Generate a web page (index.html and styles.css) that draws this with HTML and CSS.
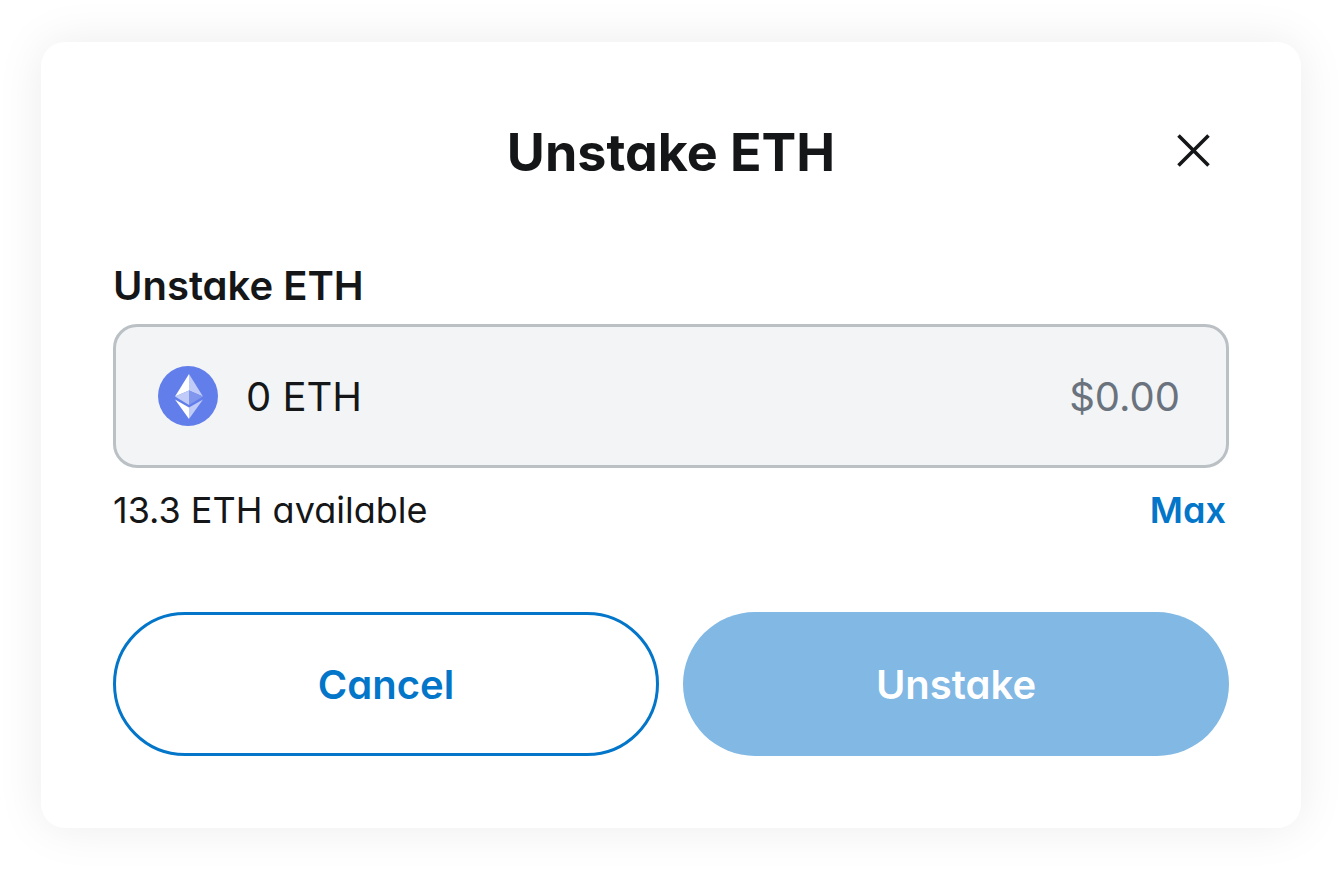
FILE: index.html
```html
<!DOCTYPE html>
<html lang="en">
<head>
    <meta charset="UTF-8">
    <meta name="viewport" content="width=device-width, initial-scale=1.0">
    <title>Unstake ETH</title>
    <link rel="stylesheet" href="styles.css">
</head>
<body>
    <form class="modal" role="dialog" aria-labelledby="modalTitle">
        <header class="modal-header">
            <h2 id="modalTitle">Unstake ETH</h2>
            <button type="button" class="close" aria-label="Close">
                <svg width="36" height="36" viewBox="0 0 36 36" fill="none" stroke="currentColor" stroke-width="3.6">
                    <path d="M3.500 3.500l30 30M33.500 3.500l-30 30"/>
                </svg>
            </button>
        </header>

        <label class="field-label" for="amount">Unstake ETH</label>
        <div class="field">
            <svg class="eth-icon" viewBox="0 0 60 60" aria-hidden="true">
                <circle cx="30" cy="30" r="30" fill="#627eea"/>
                <path d="M31 8v16.500l14 6z" fill="#c0cbf7"/>
                <path d="M31 8L17 30.500l14-6z" fill="#fff"/>
                <path d="M31 24.500v14.500l14-8.500z" fill="#8197ee"/>
                <path d="M17 30.500l14 8.500V24.500z" fill="#c0cbf7"/>
                <path d="M31 41.500V53l14-19.500z" fill="#c0cbf7"/>
                <path d="M31 53V41.500l-14-8z" fill="#fff"/>
            </svg>
            <input type="text" id="amount" value="0 ETH">
            <output class="fiat" for="amount">$0.00</output>
        </div>
        <div class="balance">
            <span>13.3 ETH available</span>
            <button type="button" class="max">Max</button>
        </div>

        <div class="actions">
            <button type="button" class="btn btn-outline">Cancel</button>
            <button type="submit" class="btn btn-primary" disabled>Unstake</button>
        </div>
    </form>
</body>
</html>
```
FILE: styles.css
```css
* {
    box-sizing: border-box;
}
body {
    margin: 0;
    padding: 42px 42px 42px 41px;
    background: #fff;
    color: #141618;
    font-family: Inter, "Liberation Sans", sans-serif;
    font-feature-settings: "cv11";
}
button,
input {
    font: inherit;
    font-feature-settings: inherit;
}
button {
    cursor: pointer;
}
.modal {
    padding: 72px;
    background: #fff;
    border-radius: 24px;
    box-shadow: 0 0 48px rgba(0, 0, 0, 0.08);
}
.modal-header {
    display: grid;
    grid-template-columns: 72px 1fr 72px;
    align-items: start;
    margin-bottom: 60px;
}
.modal-header h2 {
    grid-column: 2;
    margin: 0;
    font-size: 52px;
    line-height: 78px;
    font-weight: 700;
    text-align: center;
}
.close {
    display: flex;
    justify-content: center;
    padding: 18px;
    border: none;
    background: none;
    color: #141618;
}
.field-label {
    display: block;
    margin-bottom: 4px;
    font-size: 40px;
    line-height: 68px;
    font-weight: 600;
}
.field {
    display: flex;
    align-items: center;
    gap: 28px;
    height: 144px;
    padding: 0 46px 0 42px;
    border: 3px solid #bbc0c5;
    border-radius: 24px;
    background: #f2f4f6;
    font-size: 40px;
}
.eth-icon {
    flex: none;
    width: 60px;
    height: 60px;
}
.field input {
    flex: 1;
    min-width: 0;
    padding: 0;
    border: none;
    outline: none;
    background: none;
    color: #141618;
}
.fiat {
    color: #6a737d;
}
.balance {
    display: flex;
    justify-content: space-between;
    margin: 12px 0 72px;
    font-size: 36px;
    line-height: 60px;
}
.max {
    padding: 0 3px;
    border: none;
    background: none;
    color: #0376c9;
    font-weight: 600;
}
.actions {
    display: grid;
    grid-template-columns: 1fr 1fr;
    gap: 24px;
}
.btn {
    height: 144px;
    border: 3px solid #0376c9;
    border-radius: 72px;
    font-size: 40px;
    font-weight: 600;
}
.btn-outline {
    background: #fff;
    color: #0376c9;
}
.btn-primary {
    border-color: transparent;
    background: #0376c9;
    color: #fff;
}
.btn-primary:disabled {
    background: #81b8e4;
    cursor: default;
}
```
